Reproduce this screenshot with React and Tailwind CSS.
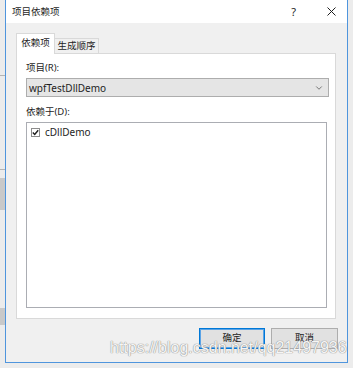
import { FiChevronDown } from 'react-icons/fi';

const ui = "font-['Noto_Sans','Noto_Sans_CJK_SC',sans-serif]";

export default function App() {
  return (
    <div className={`relative flex h-[368px] w-[353px] overflow-hidden bg-[#ececec] text-[#1e1e1e] ${ui}`}>
      {/* background window peeking out on the left */}
      <div className="flex w-[5px] shrink-0 flex-col">
        <div className="h-[75px]" />
        <div className="h-px bg-[#b4b4b4]" />
        <div className="h-[93px]" />
        <div className="h-px bg-[#b4b4b4]" />
        <div className="h-[8px]" />
        <div className="h-[32px] bg-[#c9c9c9]" />
        <div className="h-[98px]" />
        <div className="h-[17px] bg-[#c9c9c9]" />
      </div>

      {/* dialog */}
      <div className="flex h-[363px] w-[343px] shrink-0 flex-col border-x border-b border-[#4f95dd] bg-[#f0f0f0]">
        {/* title bar */}
        <div className="flex h-[23px] items-center bg-white pl-[6px]">
          <span className="text-[9.5px] leading-none">项目依赖项</span>
          <span className="ml-auto text-[11px] leading-none">?</span>
          <svg className="mr-[11px] ml-[31px]" width="9" height="9" viewBox="0 0 9 9">
            <path d="M0.5 0.5 L8.5 8.5 M8.5 0.5 L0.5 8.5" stroke="#1e1e1e" strokeWidth="1" />
          </svg>
        </div>

        <div className="flex flex-1 flex-col pt-[10px] pl-[10px]">
          {/* tabs */}
          <div className="relative z-10 -mb-px flex h-[21px] items-end">
            <div className="flex h-[21px] w-[39px] items-center justify-center border-x border-t border-[#d9d9d9] bg-white pb-[2px] text-[9.5px]">
              依赖项
            </div>
            <div className="flex h-[16px] w-[44px] items-center justify-center border-t border-r border-b border-[#d9d9d9] bg-[#f0f0f0] text-[9.5px]">
              生成顺序
            </div>
          </div>

          {/* tab panel */}
          <div className="flex h-[266px] w-[320px] flex-col border border-[#d9d9d9] bg-white pt-[7px] pl-[9px]">
            <div className="h-[14px] text-[9.5px] leading-[14px]">项目(R):</div>
            <div className="mt-[3px] flex h-[19px] w-[303px] items-center border border-[#adadad] bg-[#e5e5e5] pr-[4px] pl-[2px]">
              <span className="text-[10px] leading-none">wpfTestDllDemo</span>
              <FiChevronDown className="ml-auto text-[#606060]" size={10} />
            </div>
            <div className="mt-[8px] h-[14px] text-[9.5px] leading-[14px]">依赖于(D):</div>
            <div className="mt-[3px] h-[186px] w-[301px] border border-[#abadb3] bg-white pt-[3px] pl-[4px]">
              <div className="flex items-center gap-[5px]">
                <div className="flex h-[9px] w-[9px] items-center justify-center border border-[#8c8c8c] bg-white">
                  <svg width="7" height="7" viewBox="0 0 7 7">
                    <path d="M0.8 3.6 L2.7 5.5 L6.2 1.2" stroke="#1e1e1e" strokeWidth="1.4" fill="none" />
                  </svg>
                </div>
                <span className="text-[10px] leading-[12px]">cDllDemo</span>
              </div>
            </div>
          </div>

          {/* buttons */}
          <div className="mt-[9px] flex justify-end gap-[6px] pr-[9px]">
            <button className="flex h-[21px] w-[66px] items-center justify-center border border-[#0078d7] bg-[#e1e1e1] text-[9.5px] shadow-[inset_0_0_0_1px_#5aa3e6]">
              确定
            </button>
            <button className="flex h-[21px] w-[67px] items-center justify-center border border-[#adadad] bg-[#e1e1e1] text-[9.5px]">
              取消
            </button>
          </div>
        </div>
      </div>

      {/* watermark */}
      <div className="absolute top-[340px] left-[110px] font-['Liberation_Sans',sans-serif] text-[16px] leading-none text-[#f5f5f5] [text-shadow:0_0_1px_#8a8a8a,0_0_1px_#8a8a8a]">
        https://blog.csdn.net/qq21497936
      </div>
    </div>
  );
}
